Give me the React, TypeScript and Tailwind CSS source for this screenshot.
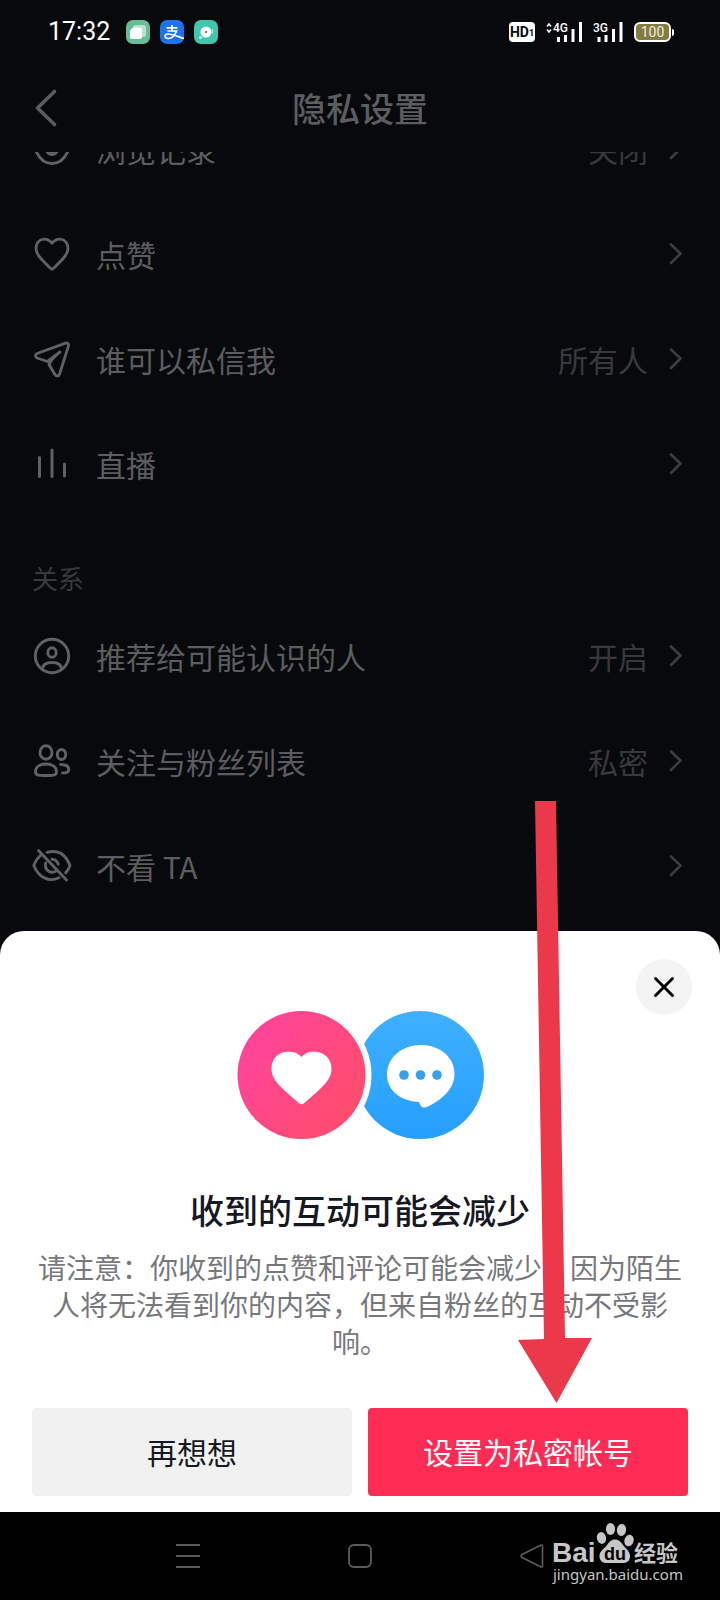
import type { ReactNode } from "react";

const stroke = {
  fill: "none",
  stroke: "currentColor",
  strokeWidth: 2.9,
  strokeLinecap: "round" as const,
  strokeLinejoin: "round" as const,
};

function RowIcon({ children }: { children: ReactNode }) {
  return (
    <svg className="size-10 shrink-0 text-[#606165]" viewBox="0 0 40 40" aria-hidden="true" {...stroke}>
      {children}
    </svg>
  );
}

const icons = {
  eye: (
    <RowIcon>
      <path d="M3 20C7 10 13 6 20 6s13 4 17 14c-4 10-10 14.500-17 14.500S7 30 3 20Z" />
      <circle cx="20" cy="20" r="5" strokeWidth="4" />
    </RowIcon>
  ),
  heart: (
    <RowIcon>
      <path d="M20 9.200C17.600 6 14.600 5 12 5.100 7.200 5.300 4 9.200 4 14.200c0 5.600 4.200 10.200 12.800 18.500 1.700 1.700 2.600 2.600 3.200 2.600s1.500-.9 3.200-2.600C31.800 24.400 36 19.800 36 14.200c0-5-3.200-8.900-8-9.100-2.600-.1-5.600.9-8 4.100Z" />
    </RowIcon>
  ),
  send: (
    <RowIcon>
      <path d="M5 14.500 33.600 4.200c2-.6 3.300.7 2.900 2.700l-8.900 28c-.8 2.300-3.500 2.700-4.700.6L17 25.500c1.500-4 5-8 11-12.500L15.500 22.500 5.200 19c-2.200-.9-2.300-3.600-.2-4.500Z" />
    </RowIcon>
  ),
  live: (
    <RowIcon>
      <path strokeWidth="3" d="M7.500 13.500v19M20 6v26.500M32.500 20v12" />
    </RowIcon>
  ),
  person: (
    <RowIcon>
      <circle cx="20" cy="20" r="16.700" />
      <ellipse cx="20" cy="16.500" rx="4.200" ry="4.800" />
      <path d="M10.500 32.500C11 28 15 26.500 20 26.500s9 1.500 9.500 6" />
    </RowIcon>
  ),
  people: (
    <RowIcon>
      <ellipse cx="14" cy="11.500" rx="6" ry="6.700" />
      <path d="M14 23c-6.500 0-10.500 3-10.500 7.500 0 3.500 1.500 4 10.500 4s10.500-.5 10.500-4C24.500 26 20.500 23 14 23Z" />
      <ellipse cx="29.500" cy="13.500" rx="4.200" ry="5" />
      <path d="M28.500 23.500c5 0 8.300 1.500 8.300 5 0 2.500-1.800 3.500-6.300 3.500" />
    </RowIcon>
  ),
  eyeOff: (
    <RowIcon>
      <path d="M15 6.300C25.500 3.500 33.500 8 38 19.500c-1 3-2.600 5.400-4.300 7.300M8.500 9.500C5.500 12 3.300 15.500 1.800 19.500 6.500 31.500 17 36.500 27 31.800" />
      <path d="M13.700 17c-1.500 6.500 4 11 9.500 8.500M20 13.200c3.200.2 5.500 2.400 6.300 5M6.500 4.500l28 29.500" />
    </RowIcon>
  ),
};

function Row({ icon, label, value }: { icon: ReactNode; label: string; value?: string }) {
  return (
    <button type="button" className="flex h-[105px] w-full items-center gap-6 px-8 text-left">
      {icon}
      <span className="flex-1 text-[30px] leading-10 text-[#5c5d60]">{label}</span>
      <span className="flex items-center gap-4">
        {value && <span className="text-[30px] leading-10 text-[#38393c]">{value}</span>}
        <svg className="size-6 text-[#3c3d41]" viewBox="0 0 24 24" aria-hidden="true" {...stroke} strokeWidth="2.600">
          <path d="m7 2.500 9.500 9-9.500 9.500" />
        </svg>
      </span>
    </button>
  );
}

function StatusBar() {
  return (
    <div className="flex h-16 items-center justify-between pr-[46px] pl-12">
      <div className="flex items-center gap-[10px]">
        <span className="pr-1.5 font-[Roboto,sans-serif] text-[25px] leading-8 text-white">17:32</span>
        <svg className="size-6" viewBox="0 0 24 24" aria-hidden="true">
          <rect width="24" height="24" rx="7" fill="#68bd99" />
          <rect x="7" y="5" width="13" height="12" rx="2.500" fill="#b8e4d0" />
          <path d="M4 10.500 7 7.500h7a2 2 0 0 1 2 2V17a2 2 0 0 1-2 2H6a2 2 0 0 1-2-2Z" fill="#fff" />
        </svg>
        <svg className="size-6" viewBox="0 0 24 24" aria-hidden="true">
          <rect width="24" height="24" rx="7" fill="#1e72ed" />
          <path d="M6.500 7.800h11M12 5v5.500M7.500 11h9c-1.500 4-4.500 7.500-8 7.500-4.500 0-4.500-4.500-.5-4.500 4 0 8.500 2 16 4.500" fill="none" stroke="#fff" strokeWidth="1.700" />
        </svg>
        <svg className="size-6" viewBox="0 0 24 24" aria-hidden="true">
          <rect width="24" height="24" rx="7" fill="#41c7ac" />
          <circle cx="12" cy="12" r="5.500" fill="#fff" />
          <circle cx="12" cy="12" r="1.200" fill="#68907f" />
          <circle cx="6.500" cy="17.500" r="1.300" fill="#fff" />
          <path d="M18.500 9.500v4" stroke="#a9e7da" strokeWidth="1.500" />
        </svg>
      </div>
      <div className="flex items-center gap-[11px] font-[Roboto,sans-serif]">
        <span className="flex h-5 w-[26px] items-center justify-center rounded bg-white text-[14px] font-bold text-[#08090c]">
          HD<span className="pt-1 text-[9px]">1</span>
        </span>
        <svg className="h-5 w-9" viewBox="0 0 36 20" aria-label="4G">
          <path d="m1 4.500 2-2.500 2 2.500M1 7.500 3 10l2-2.500" fill="none" stroke="#fff" strokeWidth="1.600" />
          <text x="7" y="10" fill="#fff" fontSize="12" fontWeight="500">4G</text>
          <path d="M12.500 15v5M19.500 13v7M27 7v13M34.500 0v20" stroke="#fff" strokeWidth="3" />
        </svg>
        <svg className="h-5 w-[30px]" viewBox="0 0 30 20" aria-label="3G">
          <text x="0" y="10" fill="#fff" fontSize="12" fontWeight="500">3G</text>
          <path d="M6 15v5M13 13v7M20.500 7v13M28 0v20" stroke="#fff" strokeWidth="3" />
        </svg>
        <div className="flex items-center gap-px">
          <span className="flex h-5 w-[37px] items-center justify-center rounded-md border-2 border-white bg-[#857b45] text-[14px] leading-4 text-[#f4f0dc]">
            100
          </span>
          <span className="h-[7px] w-0.5 rounded-r bg-white" />
        </div>
      </div>
    </div>
  );
}

function Illustration() {
  return (
    <svg className="mx-auto h-32 w-[248px]" viewBox="0 0 248 128" aria-hidden="true">
      <defs>
        <linearGradient id="pink" x1="0.100" y1="0.250" x2="0.850" y2="0.750">
          <stop offset="0" stopColor="#ff4499" />
          <stop offset="1" stopColor="#ff4c70" />
        </linearGradient>
        <linearGradient id="blue" x1="0" y1="0" x2="0" y2="1">
          <stop offset="0" stopColor="#40b0ff" />
          <stop offset="1" stopColor="#259ffe" />
        </linearGradient>
      </defs>
      <circle cx="184" cy="64" r="64" fill="url(#blue)" />
      <circle cx="65.500" cy="64" r="70" fill="#fff" />
      <circle cx="65.500" cy="64" r="64" fill="url(#pink)" />
      <path d="M65.500 46C61 41 56 40.500 51 40.800 41 41.500 35 49 35.500 59c.5 8 6.500 14.500 13.500 21l14 12.300c1.500 1.300 3.500 1.300 5 0L82 80c7-6.500 13-13 13.500-21 .5-10-6-17.500-16-18.200-5-.3-9.500.2-14 5.200Z" fill="#fff" />
      <path d="M185 34c-19 0-34 12.500-34 29.500 0 16.500 14 26.500 32 27.500l2 4c1.500 2 4.500 2 7 .5 16-8 26.500-18.500 26.500-33C218.500 46.500 204 34 185 34Z" fill="#fff" />
      <g fill="#389fea">
        <circle cx="168" cy="64" r="4.800" />
        <circle cx="184.500" cy="64" r="4.800" />
        <circle cx="201" cy="64" r="4.800" />
      </g>
    </svg>
  );
}

function Sheet() {
  return (
    <section
      role="dialog"
      aria-labelledby="sheet-title"
      className="relative rounded-t-[24px] bg-white px-8 pt-20 pb-4 text-center"
    >
      <button
        type="button"
        aria-label="关闭"
        className="absolute top-7 right-7 flex size-14 items-center justify-center rounded-full bg-[#f4f4f4]"
      >
        <svg className="size-6 text-black" viewBox="0 0 24 24" aria-hidden="true" {...stroke}>
          <path d="m3.500 3.500 17 17M20.500 3.500l-17 17" />
        </svg>
      </button>
      <Illustration />
      <h2 id="sheet-title" className="mt-[47px] text-[34px] leading-[48px] font-medium text-[#161823]">
        收到的互动可能会减少
      </h2>
      <p className="mt-[15px] text-[28px] leading-[37px] text-[#77787c]">
        请注意：你收到的点赞和评论可能会减少，因为陌生人将无法看到你的内容，但来自粉丝的互动不受影响。
      </p>
      <div className="mt-12 grid grid-cols-2 gap-4 text-[30px] leading-10">
        <button type="button" className="h-[88px] rounded bg-[#f1f1f1] pb-0.5 text-[#161823]">
          再想想
        </button>
        <button type="button" className="h-[88px] rounded bg-[#fe2c55] pb-0.5 text-white">
          设置为私密帐号
        </button>
      </div>
    </section>
  );
}

function NavBar() {
  return (
    <nav className="relative flex h-[88px] items-center justify-center gap-[148px] bg-black text-[#5d5d5d]">
      <button type="button" aria-label="菜单">
        <svg className="size-6" viewBox="0 0 24 24" fill="none" stroke="currentColor" strokeWidth="2">
          <path d="M0 1h24M0 12h24M0 23h24" />
        </svg>
      </button>
      <button type="button" aria-label="主页">
        <svg className="size-6" viewBox="0 0 24 24" fill="none" stroke="currentColor" strokeWidth="1.800">
          <rect x="1" y="1" width="22" height="22" rx="5" />
        </svg>
      </button>
      <button type="button" aria-label="返回">
        <svg className="size-6" viewBox="0 0 24 24" fill="none" stroke="currentColor" strokeWidth="1.600" strokeLinejoin="round">
          <path d="M22.500 2.500v19q0 2-2 1.200L2 13.500q-2-1.500 0-3L20.500 1.300q2-.8 2 1.200Z" />
        </svg>
      </button>
      <svg
        className="absolute top-2 right-[30px] h-[70px] w-[140px]"
        viewBox="0 0 140 70"
        fill="#c6c6c6"
        fontFamily="'Liberation Sans', 'Noto Sans CJK SC', sans-serif"
      >
        <text x="2" y="42" fontSize="28" fontWeight="700">Bai</text>
        <ellipse cx="51.500" cy="18" rx="4.600" ry="6" transform="rotate(-12 51.500 18)" />
        <ellipse cx="60.500" cy="9" rx="4.600" ry="6" />
        <ellipse cx="71.500" cy="10" rx="4.600" ry="6" transform="rotate(8 71.500 10)" />
        <ellipse cx="79" cy="20.500" rx="4.600" ry="5.800" transform="rotate(18 79 20.500)" />
        <path d="M65 19.500c-4 0-6 2.500-8 5.500-2.500 3.500-7 5.500-7.500 10.500-.4 5 3 7.500 7 7.500h17c4 0 7-3 6.500-7.500-.5-5-4.500-7-7-10.500-2-3-4-5.500-8-5.500Z" />
        <text x="65" y="40" fill="#000" fontSize="18" fontWeight="700" textAnchor="middle">du</text>
        <text x="84" y="41" fontSize="22" fontWeight="700">经验</text>
        <text x="3" y="60" fontSize="15" fontFamily="'Noto Sans', sans-serif">jingyan.baidu.com</text>
      </svg>
    </nav>
  );
}

export default function App() {
  return (
    <div className="relative flex min-h-screen flex-col overflow-hidden bg-[#08090c] font-['Noto_Sans_CJK_SC',sans-serif]">
      <StatusBar />
      <header className="relative flex h-[88px] items-center justify-center">
        <button type="button" aria-label="返回" className="absolute left-[26px] text-[#5c5d60]">
          <svg className="size-10" viewBox="0 0 40 40" {...stroke} strokeWidth="3.600">
            <path d="M28.500 3.500 11.500 20l17 16.500" />
          </svg>
        </button>
        <h1 className="text-[34px] leading-[48px] font-medium text-[#5c5d60]">隐私设置</h1>
      </header>
      <main className="flex-1 overflow-hidden pb-[13px]">
        <div className="-mt-14">
          <Row icon={icons.eye} label="浏览记录" value="关闭" />
          <Row icon={icons.heart} label="点赞" />
          <Row icon={icons.send} label="谁可以私信我" value="所有人" />
          <Row icon={icons.live} label="直播" />
          <h2 className="px-8 pt-[42px] pb-1.5 text-[26px] leading-[39px] text-[#38393c]">关系</h2>
          <Row icon={icons.person} label="推荐给可能认识的人" value="开启" />
          <Row icon={icons.people} label="关注与粉丝列表" value="私密" />
          <Row icon={icons.eyeOff} label="不看 TA" />
        </div>
      </main>
      <Sheet />
      <NavBar />
      <svg
        className="pointer-events-none absolute right-32 bottom-[197px] h-[602px] w-[74px]"
        viewBox="0 0 74 602"
        fill="#eb384b"
        aria-hidden="true"
      >
        <path d="M17 0h21l9 537h27L38.500 602 0 539l26-1Z" />
      </svg>
    </div>
  );
}
